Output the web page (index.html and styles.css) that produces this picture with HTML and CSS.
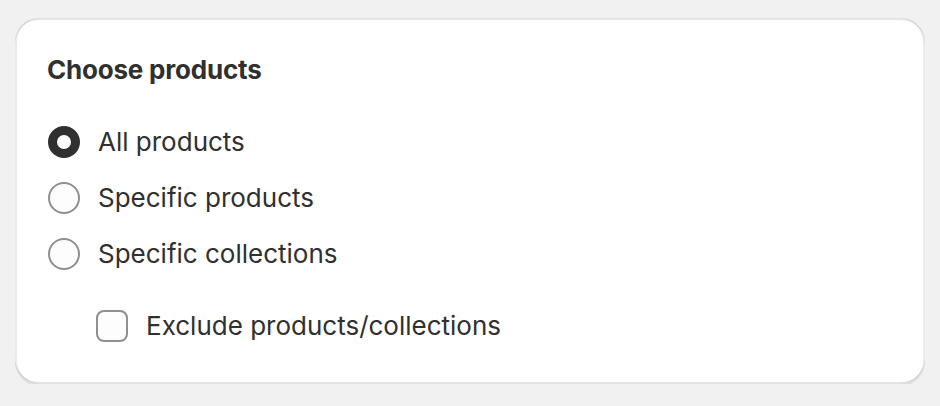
FILE: index.html
```html
<!DOCTYPE html>
<html lang="en">
<head>
<meta charset="utf-8">
<title>Choose products</title>
<link rel="stylesheet" href="styles.css">
</head>
<body>
<div class="card">
  <h2 class="card-title">Choose products</h2>
  <div class="choices">
    <label class="choice">
      <input type="radio" name="scope" class="radio" checked>
      <span class="choice-label">All products</span>
    </label>
    <label class="choice">
      <input type="radio" name="scope" class="radio">
      <span class="choice-label">Specific products</span>
    </label>
    <label class="choice">
      <input type="radio" name="scope" class="radio">
      <span class="choice-label">Specific collections</span>
    </label>
  </div>
  <div class="children">
    <label class="choice">
      <input type="checkbox" class="checkbox">
      <span class="choice-label">Exclude products/collections</span>
    </label>
  </div>
</div>
</body>
</html>
```
FILE: styles.css
```css
html, body {
  margin: 0;
  padding: 0;
}
body {
  background: #f1f1f1;
  padding: 18px 15px 0 15px;
  font-family: "Inter", "Liberation Sans", sans-serif;
  color: #303030;
}
.card {
  background: #ffffff;
  border-radius: 24px;
  height: 366px;
  box-sizing: border-box;
  padding: 32px 32px 38px 32px;
  box-shadow:
    0 2px 0 0 rgba(26, 26, 26, 0.07),
    inset 2px 0 0 0 rgba(0, 0, 0, 0.08),
    inset -2px 0 0 0 rgba(0, 0, 0, 0.08),
    inset 0 -2px 0 0 rgba(0, 0, 0, 0.11),
    inset 0 2px 0 0 rgba(204, 204, 204, 0.5);
}
.card-title {
  margin: 0;
  font-size: 26px;
  line-height: 40px;
  font-weight: 650;
  letter-spacing: -0.2px;
}
.choices {
  margin-top: 32px;
  display: flex;
  flex-direction: column;
  gap: 16px;
}
.choice {
  display: flex;
  align-items: center;
  gap: 18px;
  height: 40px;
  cursor: pointer;
}
.choice-label {
  font-size: 26px;
  line-height: 40px;
  font-weight: 440;
}
.radio {
  -webkit-appearance: none;
  appearance: none;
  margin: 0 0 0 1px;
  width: 32px;
  height: 32px;
  box-sizing: border-box;
  border-radius: 50%;
  border: 2px solid #8f8f8f;
  background: #fdfdfd;
  flex: none;
}
.radio:checked {
  border: 9px solid #303030;
  background: #ffffff;
}
.children {
  margin-top: 32px;
  padding-left: 49px;
}
.checkbox {
  -webkit-appearance: none;
  appearance: none;
  margin: 0;
  width: 32px;
  height: 32px;
  box-sizing: border-box;
  border-radius: 8px;
  border: 2px solid #8f8f8f;
  background: #fdfdfd;
  flex: none;
}
```
